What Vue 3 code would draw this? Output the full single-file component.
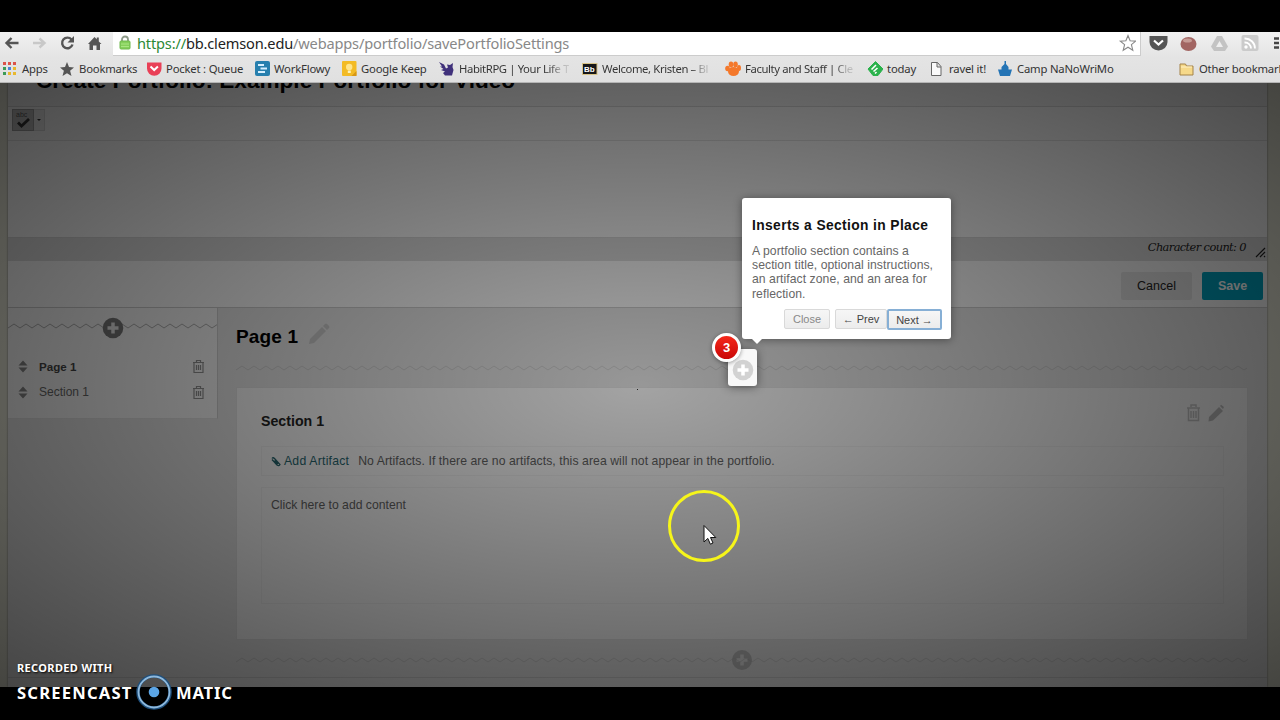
<script setup>
const bookmarks = [
  { icon: 'apps', label: 'Apps' },
  { icon: 'star', label: 'Bookmarks' },
  { icon: 'pocket', label: 'Pocket : Queue' },
  { icon: 'flowy', label: 'WorkFlowy' },
  { icon: 'keep', label: 'Google Keep' },
  { icon: 'habit', label: 'HabitRPG | Your Life T', fade: true },
  { icon: 'bb', label: 'Welcome, Kristen – Bl', fade: true },
  { icon: 'paw', label: 'Faculty and Staff | Cle', fade: true },
  { icon: 'feedly', label: 'today' },
  { icon: 'page', label: 'ravel it!' },
  { icon: 'camp', label: 'Camp NaNoWriMo' },
  { icon: 'folder', label: 'Other bookmarks' }
]

const outline = [
  { name: 'Page 1', current: true },
  { name: 'Section 1', current: false }
]
</script>

<template>
  <div class="screen">
    <header class="browser">
      <div class="toolbar">
        <div class="nav">
          <svg width="104" height="24" viewBox="0 0 104 24">
            <path d="M18.500 11H7M11.500 6L6.500 11L11.500 16" class="nav-stroke" />
            <path d="M33 11h11M39.500 6.500L44.500 11L39.500 15.500" class="nav-stroke off" />
            <path d="M71.500 7.500A5.300 5.300 0 1 0 72.500 12.500" class="nav-stroke" />
            <path d="M74 4v6.500h-6.500z" fill="#555" />
            <path d="M88 12L94.500 5l2.300 2.300V5.500h2v4L101.500 12H100v6h-3.500v-4.500h-3.500V18H89.500v-6z" fill="#555" />
          </svg>
        </div>
        <div class="address">
          <svg class="lock" width="12" height="15" viewBox="0 0 12 15">
            <path d="M3 7V4.500a3 3 0 0 1 6 0V7" fill="none" stroke="#8d9a88" stroke-width="1.800" />
            <rect x="1" y="6" width="10" height="8" rx="1" fill="#85d05a" stroke="#6fb84c" />
            <path d="M2 9h8M2 11.500h8" stroke="#a9e582" />
          </svg>
          <div class="url"><span class="secure">https://</span><span class="host">bb.clemson.edu</span>/webapps/portfolio/savePortfolioSettings</div>
          <svg class="fav" width="18" height="18" viewBox="0 0 18 18">
            <path d="M10 1.500l2.100 5.200 5.600.4-4.300 3.600 1.400 5.500L10 13.200l-4.800 3 1.400-5.500L2.300 7.100l5.600-.4z" fill="#fff" stroke="#888" stroke-width="1.100" />
          </svg>
        </div>
        <div class="extensions">
          <svg width="138" height="24" viewBox="0 0 138 24">
            <path d="M8.500 4h18v6a9 8.500 0 0 1-18 0z" fill="#555" />
            <path d="M13 8.500l4.500 4 4.500-4" fill="none" stroke="#fff" stroke-width="2.200" />
            <ellipse cx="47.500" cy="12" rx="8" ry="7" fill="#a26562" />
            <ellipse cx="46.500" cy="8.500" rx="4.500" ry="2" fill="#c69b95" />
            <path d="M76 4h5l6 10.500-3 4.500H73l-3-4.500z" fill="#c3c3c3" />
            <path d="M78.500 9l3.500 6h-7z" fill="#eee" />
            <rect x="100.500" y="3" width="17" height="16" rx="2" fill="#cbcbcb" />
            <path d="M103.500 6.500a10 10 0 0 1 10.500 10M103.500 10.500a6 6 0 0 1 6.500 6" fill="none" stroke="#fff" stroke-width="1.800" />
            <circle cx="105" cy="15" r="1.700" fill="#fff" />
            <path d="M133 6.500h8M133 11h8M133 15.500h8" stroke="#444" stroke-width="2.600" />
          </svg>
        </div>
      </div>

      <nav class="bookmarks">
        <div v-for="mark in bookmarks" :key="mark.label" class="bookmark">
          <svg class="mark-icon" width="16" height="16" viewBox="0 0 16 16">
            <g v-if="mark.icon === 'apps'">
              <path d="M1 1h3v3H1zM6 1h3v3H6zM11 1h3v3h-3z" fill="#dc5349" />
              <path d="M1 6h3v3H1z" fill="#3c9b56" />
              <path d="M6 6h3v3H6z" fill="#4a83d8" />
              <path d="M11 6h3v3h-3zM6 11h3v3H6zM11 11h3v3h-3z" fill="#e8b82f" />
              <path d="M1 11h3v3H1z" fill="#3c9b56" />
            </g>
            <path v-else-if="mark.icon === 'star'" d="M8 1l2 5 5 .4-3.900 3.400L12.500 15 8 12.200 3.500 15l1.400-5.200L1 6.400 6 6z" fill="#555" />
            <g v-else-if="mark.icon === 'pocket'">
              <path d="M1 1.500h14.500v6a7.250 7.250 0 0 1-14.500 0z" fill="#e94057" />
              <path d="M4.500 5.500L8.200 9l3.700-3.500" fill="none" stroke="#fff" stroke-width="2" />
            </g>
            <g v-else-if="mark.icon === 'flowy'">
              <rect x="1" width="15" height="15" rx="2" fill="#267fae" />
              <path d="M4 4h6M6.500 7.500H13M4 11h7" stroke="#d6efff" stroke-width="1.800" />
            </g>
            <g v-else-if="mark.icon === 'keep'">
              <rect x="1" width="14.500" height="15" rx="1" fill="#f3bb25" />
              <circle cx="8.200" cy="6" r="3.200" fill="#ffe58c" />
              <path d="M6.800 9.500h3V12h-3z" fill="#fff2b8" />
              <path d="M15.500 10v5h-5z" fill="#d79714" />
            </g>
            <path v-else-if="mark.icon === 'habit'" d="M0 1l5 2.500 2 4 2-1-1-3 3 .5 3-2-.5 4 1 3-1.500 5.500H6L4 12l2-1.500-4-1.500 2.500-1L1 5.500h2z" fill="#40317b" />
            <g v-else-if="mark.icon === 'bb'">
              <rect x="0" y="2" width="15.500" height="12" fill="#d8c387" />
              <rect x="1" y="3" width="13.500" height="10" fill="#171719" />
              <text x="2" y="11" class="bb-text">Bb</text>
            </g>
            <g v-else-if="mark.icon === 'paw'" fill="#f4782b">
              <ellipse cx="8.500" cy="10.500" rx="5.500" ry="4.500" />
              <ellipse cx="2.500" cy="7.500" rx="2.300" ry="2.800" />
              <ellipse cx="6" cy="3.500" rx="2.300" ry="3" />
              <ellipse cx="10.500" cy="3.500" rx="2.300" ry="3" />
              <ellipse cx="14" cy="7" rx="2" ry="3" />
            </g>
            <g v-else-if="mark.icon === 'feedly'">
              <path d="M8.500 0.500L16 8l-5 6.500H6L1 8z" fill="#2bb24c" stroke="#2bb24c" stroke-linejoin="round" />
              <path d="M4.500 8.500L9 4M6.500 10.500L10.500 7M8 12.500l1.500-1.500" stroke="#fff" stroke-width="1.600" />
            </g>
            <path v-else-if="mark.icon === 'page'" d="M2.500 1.500h6l3.500 4v9H2.500zM8 1.500v4.500h4" fill="#fafafa" stroke="#666" />
            <path v-else-if="mark.icon === 'camp'" d="M7.500 0h1.500v3l2.500 3v2.500H15L13 15H3L1 8.500h3.500V6l3-3z" fill="#2474b5" />
            <g v-else>
              <path d="M1 3h5.500l1 2H14v9H1z" fill="#f6d98a" stroke="#a48349" />
              <path d="M2 6h11" stroke="#fff1c4" />
            </g>
          </svg>
          <span class="mark-label" :class="{ fade: mark.fade }">{{ mark.label }}</span>
        </div>
      </nav>
    </header>

    <main class="viewport">
      <div class="sheet">
        <div class="title-bar"><h1>Create Portfolio: Example Portfolio for Video</h1></div>
        <div class="editor-tools">
          <div class="spell">
            <span class="abc">abc</span>
            <svg width="15" height="11" viewBox="0 0 15 11"><path d="M2 4.500l3.500 3.500L13 1" fill="none" stroke="#333" stroke-width="2.800" /></svg>
          </div>
          <div class="spell-arrow"></div>
        </div>
        <div class="editor"></div>
        <div class="status">
          <span>Character count: 0</span>
          <svg width="11" height="11" viewBox="0 0 11 11"><path d="M1 10L10 1M5 10l5-5M9 10l1-1" stroke="#222" stroke-width="1.200" /></svg>
        </div>
        <div class="actions">
          <button class="cancel">Cancel</button>
          <button class="save">Save</button>
        </div>

        <div class="workspace">
          <aside class="outline">
            <div class="divider">
              <svg class="zigzag" width="100%" height="8">
                <defs>
                  <pattern id="zig" width="12" height="8" patternUnits="userSpaceOnUse">
                    <path d="M0 6L6 2L12 6" fill="none" stroke="#aaa" />
                  </pattern>
                </defs>
                <rect width="100%" height="8" fill="url(#zig)" />
              </svg>
              <svg class="plus" width="22" height="22" viewBox="0 0 22 22">
                <circle cx="11" cy="11" r="10.300" fill="#777" />
                <path d="M11 5.500v11M5.500 11h11" stroke="#e4e4e4" stroke-width="3.500" />
              </svg>
            </div>
            <ul>
              <li v-for="item in outline" :key="item.name" :class="{ current: item.current }">
                <svg width="10" height="13" viewBox="0 0 10 13"><path d="M5 0.500l4.500 5H.5zM5 12.500l4.500-5H.5z" fill="#858585" /></svg>
                <span>{{ item.name }}</span>
                <svg width="13" height="15" viewBox="0 0 13 15">
                  <path d="M1 3.500h11M4.500 3V1.500h4V3M2 3.500v10h9v-10M4.500 6v5M6.500 6v5M8.500 6v5" fill="none" stroke="#8f8f8f" stroke-width="1.200" />
                </svg>
              </li>
            </ul>
          </aside>

          <section class="page">
            <div class="page-head">
              <h2>Page 1</h2>
              <svg width="22" height="22" viewBox="0 0 22 22">
                <path d="M2 16L14 4l4 4L6 20l-5 1zM15 3l2-2q1-1 2 0l2 2q1 1 0 2l-2 2z" fill="#c4c4c4" />
              </svg>
            </div>
            <svg class="zigzag soft" width="1011" height="8"><rect width="1011" height="8" fill="url(#zig)" /></svg>

            <div class="card">
              <div class="card-head">
                <h3>Section 1</h3>
                <svg width="40" height="20" viewBox="0 0 40 20">
                  <path d="M3 6h13M7 5V3h5v2M4.500 6v12.500h10V6M7 9v7M9.500 9v7M12 9v7" fill="none" stroke="#c0c0c0" stroke-width="1.500" />
                  <path d="M25 15L35 5l4 4-10 9.500-4.500 1zM36 4l1-1.300L40 5l-1 2z" fill="#b9b9b9" />
                </svg>
              </div>
              <div class="artifact">
                <svg width="10" height="11" viewBox="0 0 10 11">
                  <path d="M1 3.500l5 5.500q2 1.500 3-.5L3.500 2.500Q2 1 1 2.500M3.500 4.500L7 8" fill="none" stroke="#26646c" stroke-width="1.300" />
                </svg>
                <a>Add Artifact</a>
                <span>No Artifacts. If there are no artifacts, this area will not appear in the portfolio.</span>
              </div>
              <div class="content">Click here to add content</div>
            </div>

            <div class="divider end">
              <svg class="zigzag soft" width="100%" height="8"><rect width="100%" height="8" fill="url(#zig)" /></svg>
              <svg class="plus" width="22" height="22" viewBox="0 0 22 22">
                <circle cx="11" cy="11" r="10" fill="#b9b9b9" />
                <path d="M11 5.500v11M5.500 11h11" stroke="#dedede" stroke-width="3.500" />
              </svg>
            </div>
          </section>
        </div>
      </div>
      <div class="shade"></div>
    </main>

    <div class="speck"></div>
    <div class="target">
      <svg width="22" height="22" viewBox="0 0 22 22">
        <circle cx="11" cy="11" r="10.300" fill="#d2d2d2" />
        <path d="M11 5.500v11M5.500 11h11" stroke="#fff" stroke-width="3.500" />
      </svg>
    </div>
    <div class="step">3</div>
    <div class="tip">
      <h4>Inserts a Section in Place</h4>
      <p>A portfolio section contains a<br>section title, optional instructions,<br>an artifact zone, and an area for<br>reflection.</p>
      <div class="tip-actions">
        <button class="close">Close</button>
        <button class="prev">← Prev</button>
        <button class="next">Next →</button>
      </div>
    </div>

    <svg class="pointer" width="74" height="74" viewBox="0 0 74 74">
      <circle cx="37" cy="37" r="34.500" fill="none" stroke="#f6f51a" stroke-width="3" />
      <path d="M37 36.500v16.500l3.800-3.600 2.600 5.800 2.600-1.200-2.500-5.500h5.300z" fill="#fff" stroke="#111" />
    </svg>

    <div class="watermark">
      <div class="recorded">RECORDED WITH</div>
      <div class="brand">
        <span class="word-a">SCREENCAST</span>
        <svg width="36" height="36" viewBox="0 0 36 36">
          <circle cx="18" cy="18" r="16" fill="none" stroke="#1e4f7c" stroke-width="3.500" />
          <circle cx="18" cy="18" r="15.500" fill="none" stroke="#8fb9dc" stroke-width="1.800" />
          <circle cx="18" cy="18" r="5.300" fill="#5ba5e6" />
        </svg>
        <span class="word-b">MATIC</span>
      </div>
    </div>
  </div>
</template>

<style>
body {
  margin: 0;
  background: #000;
  overflow: hidden;
}
</style>

<style scoped>
.screen {
  position: relative;
  box-sizing: border-box;
  width: 1280px;
  height: 720px;
  padding-top: 32px;
  overflow: hidden;
  background: #000;
  font-family: "Liberation Sans", Arial, sans-serif;
}

svg {
  display: block;
  flex: none;
}

h1, h2, h3, h4, p, ul {
  margin: 0;
  padding: 0;
}

button {
  box-sizing: border-box;
  padding: 0;
  border: 0;
  font-family: inherit;
}

.browser {
  height: 51px;
  background: linear-gradient(#f1f1f1, #e4e4e4 26px, #e0e0e0);
  font-family: "Noto Sans", "Open Sans", sans-serif;
}

.toolbar {
  display: flex;
  height: 24px;
}

.nav {
  width: 113px;
}

.nav-stroke {
  fill: none;
  stroke: #555;
  stroke-width: 2.4;
}

.nav-stroke.off {
  stroke: #c8c8c8;
}

.address {
  display: flex;
  align-items: center;
  width: 1028px;
  box-sizing: border-box;
  padding: 0 4px 2px 6px;
  background: #fff;
  border-right: 1px solid #ccc;
  border-bottom: 1px solid #ccc;
}

.url {
  flex: 1;
  margin-left: 6px;
  font-size: 14.6px;
  line-height: 20px;
  letter-spacing: -0.17px;
  color: #888;
  white-space: nowrap;
}

.secure {
  color: #2c8a36;
}

.host {
  color: #222;
}

.bookmarks {
  display: grid;
  grid-template-columns: 57px 87px 108px 87px 98px 143px 143px 142px 62px 68px 182px 120px;
  align-items: center;
  height: 26px;
  padding-left: 2px;
  border-bottom: 1px solid #b5b5b5;
  overflow: hidden;
}

.bookmark {
  display: flex;
  align-items: center;
  gap: 4px;
}

.mark-label {
  font-size: 11.3px;
  line-height: 16px;
  letter-spacing: -0.2px;
  color: #333;
  white-space: nowrap;
}

.mark-label.fade {
  letter-spacing: -0.38px;
  background: linear-gradient(90deg, #333 90px, #aaa 101px, #d0d0d0 112px);
  background-clip: text;
  color: transparent;
}

.bb-text {
  font: bold 8px "Liberation Sans", sans-serif;
  fill: #fff;
}

.viewport {
  position: relative;
  box-sizing: border-box;
  height: 604px;
  padding: 0 13px 0 8px;
  background: #dedecf;
  overflow: hidden;
}

.sheet {
  height: 604px;
  background: #dfdfdf;
  box-shadow: 0 0 2px #777;
}

.shade {
  position: absolute;
  inset: 0;
  background: radial-gradient(ellipse farthest-corner at center, rgba(0, 0, 0, 0.32) 0%, rgba(0, 0, 0, 0.69) 100%);
}

.title-bar {
  height: 23px;
  border-bottom: 1px solid #cfcfcf;
  background: #e8e8e8;
  overflow: hidden;
}

.title-bar h1 {
  margin-top: -15px;
  padding-left: 28px;
  font-size: 22.6px;
  line-height: 26px;
  color: #000;
  white-space: nowrap;
}

.editor-tools {
  display: flex;
  box-sizing: border-box;
  height: 34px;
  padding: 2px 4px;
  background: #f0f0f0;
  border-bottom: 1px solid #dadada;
}

.spell {
  box-sizing: border-box;
  width: 22px;
  height: 22px;
  padding: 1px 3px;
  border: 1px solid #9a9a9a;
  background: #b5b5b5;
}

.abc {
  display: block;
  font-size: 7px;
  line-height: 7px;
  color: #555;
}

.spell-arrow {
  box-sizing: border-box;
  width: 11px;
  height: 22px;
  padding: 9px 3px;
  border: 1px solid #d0d0d0;
  border-left: 0;
  background: #e2e2e2;
}

.spell-arrow::after {
  content: "";
  display: block;
  width: 0;
  border: 2px solid transparent;
  border-top-color: #333;
  border-bottom: 0;
}

.editor {
  height: 96px;
  background: #f3f3f3;
}

.status {
  display: flex;
  justify-content: flex-end;
  box-sizing: border-box;
  height: 24px;
  padding-right: 1px;
  gap: 9px;
  border-top: 1px solid #d0d0d0;
  background: #d7d7d7;
  line-height: 18px;
  color: #222;
}

.status span {
  font-family: "DejaVu Serif", serif;
  font-size: 11.4px;
  font-style: italic;
  letter-spacing: -0.6px;
}

.status svg {
  margin-top: 9px;
}

.actions {
  display: flex;
  justify-content: flex-end;
  gap: 10px;
  box-sizing: border-box;
  height: 47px;
  padding: 11px 4px 0;
  background: #f5f5f5;
  border-bottom: 1px solid #c6c6c6;
}

.cancel {
  width: 71px;
  height: 28px;
  background: #e2e2e2;
  border-radius: 2px;
  color: #222;
  font-size: 12.5px;
}

.save {
  width: 61px;
  height: 28px;
  background: #00a0bd;
  border-radius: 2px;
  color: #fff;
  font-size: 12.5px;
  font-weight: bold;
}

.workspace {
  display: flex;
  align-items: flex-start;
  height: 370px;
  box-sizing: border-box;
  border-bottom: 1px solid #cacaca;
}

.outline {
  box-sizing: border-box;
  width: 210px;
  height: 111px;
  padding-top: 9px;
  background: #f2f2f2;
  border-right: 1px solid #cacaca;
  border-bottom: 1px solid #dcdcdc;
}

.divider {
  display: grid;
  align-items: center;
  justify-items: center;
}

.divider > svg {
  grid-area: 1 / 1;
}

.outline .zigzag {
  margin-top: -4px;
}

.outline ul {
  margin-top: 14px;
  list-style: none;
}

.outline li {
  display: flex;
  align-items: center;
  height: 26px;
  padding: 0 12px 0 10px;
  font-size: 12px;
  color: #666;
}

.outline li span {
  flex: 1;
  padding-left: 11px;
}

.outline li.current {
  font-weight: bold;
  font-size: 11.6px;
  color: #444;
}

.page {
  width: 1012px;
  margin-left: 18px;
}

.page-head {
  display: flex;
  gap: 10px;
  height: 56px;
  padding-top: 15px;
  box-sizing: border-box;
}

.page-head h2 {
  font-size: 19px;
  line-height: 28px;
  letter-spacing: 0.15px;
  color: #000;
}

.soft {
  opacity: 0.4;
}

.card {
  box-sizing: border-box;
  width: 1012px;
  height: 253px;
  margin-top: 15px;
  padding: 23px 23px 0 24px;
  border: 1px solid #dcdcdc;
  background: #f1f1f1;
}

.card-head {
  display: flex;
  justify-content: space-between;
  height: 35px;
}

.card-head h3 {
  font-size: 14.2px;
  line-height: 20px;
  color: #222;
}

.card-head svg {
  margin-top: -9px;
}

.artifact {
  display: flex;
  align-items: center;
  box-sizing: border-box;
  height: 30px;
  padding-left: 9px;
  border: 1px solid #e8e8e8;
  font-size: 12.2px;
  letter-spacing: 0.08px;
  color: #606060;
}

.artifact a {
  margin: 0 9px 0 3px;
  letter-spacing: 0.24px;
  color: #26646c;
}

.content {
  box-sizing: border-box;
  height: 117px;
  margin-top: 11px;
  padding: 8px 9px;
  border: 1px solid #e8e8e8;
  font-size: 12.2px;
  line-height: 18px;
  color: #606060;
}

.divider.end {
  margin-top: 9px;
}

.speck {
  position: absolute;
  left: 637px;
  top: 389px;
  width: 1px;
  height: 1px;
  background: #222;
}

.target {
  position: absolute;
  left: 728px;
  top: 349px;
  box-sizing: border-box;
  width: 29px;
  height: 37px;
  padding: 10px 4px;
  border-radius: 3px;
  background: #f8f8f8;
  box-shadow: 0 1px 10px rgba(0, 0, 0, 0.45);
}

.step {
  position: absolute;
  left: 712px;
  top: 333px;
  width: 23px;
  height: 23px;
  border: 3px solid #fff;
  border-radius: 50%;
  background: linear-gradient(#f5281a, #c90808);
  color: #fff;
  font: bold 13px/23px "Liberation Sans", sans-serif;
  text-align: center;
  box-shadow: 0 1px 4px rgba(0, 0, 0, 0.4);
}

.tip {
  position: absolute;
  left: 742px;
  top: 198px;
  box-sizing: border-box;
  width: 209px;
  height: 141px;
  padding: 18px 9px 0 10px;
  border-radius: 3px;
  background: #fff;
  box-shadow: 0 1px 9px rgba(0, 0, 0, 0.4);
}

.tip::after {
  content: "";
  position: absolute;
  left: 10px;
  top: 141px;
  border: 5px solid transparent;
  border-top-color: #fff;
  border-bottom: 0;
}

.tip h4 {
  font-size: 13.8px;
  line-height: 20px;
  letter-spacing: 0.38px;
  color: #111;
  white-space: nowrap;
}

.tip p {
  margin-top: 8px;
  font-size: 12.2px;
  line-height: 14.2px;
  letter-spacing: 0.06px;
  color: #666;
  white-space: nowrap;
}

.tip-actions {
  display: flex;
  justify-content: flex-end;
  margin-top: 8px;
}

.tip-actions button {
  height: 20px;
  border: 1px solid #d9d9d9;
  border-radius: 2px;
  background: linear-gradient(#f6f6f6, #ececec);
  font-size: 11px;
  line-height: 19px;
  color: #444;
}

.tip-actions .close {
  width: 46px;
  margin-right: 5px;
  color: #888;
}

.tip-actions .prev {
  width: 52px;
}

.tip-actions .next {
  width: 55px;
  height: 21px;
  border: 2px solid #86afd5;
}

.pointer {
  position: absolute;
  left: 667px;
  top: 489px;
}

.watermark {
  position: absolute;
  left: 17px;
  top: 660px;
  color: #fff;
  font-family: "Noto Sans", sans-serif;
  font-weight: bold;
  text-shadow: 1px 1px 2px #000;
}

.recorded {
  font-size: 11px;
  line-height: 16px;
  letter-spacing: 0.35px;
}

.brand {
  display: flex;
  align-items: center;
  height: 32px;
  font-size: 16.6px;
}

.word-a {
  width: 119px;
  letter-spacing: 1.2px;
}

.word-b {
  margin-left: 4px;
  letter-spacing: 0.8px;
}
</style>
